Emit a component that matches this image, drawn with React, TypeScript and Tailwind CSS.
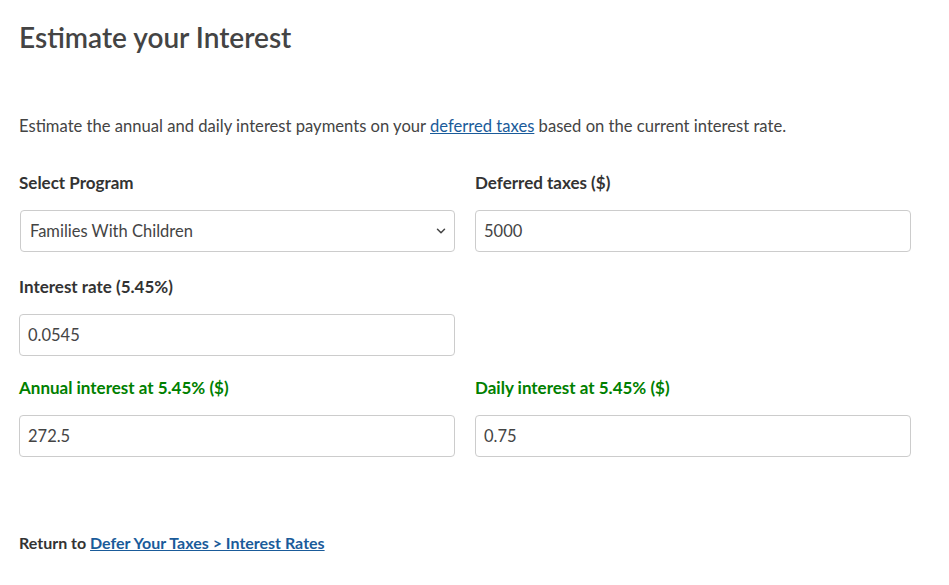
import React from "react";

const font = { fontFamily: '"Lato", "Open Sans", sans-serif' };

function Field({ label, value, green, select }: { label: string; value: string; green?: boolean; select?: boolean }) {
  return (
    <div className="flex flex-col">
      <div className={`text-[17px] leading-6 font-bold ${green ? "text-[#008000]" : "text-[#333333]"}`}>{label}</div>
      {select ? (
        <div className="mt-[15px] ml-px h-[42px] border border-[#cccccc] rounded-[4px] flex items-center justify-between pl-[9px] pr-[8px] text-[16.5px] text-[#444444] bg-white">
          <span>{value}</span>
          <svg width="10" height="10" viewBox="0 0 10 10" fill="none">
            <path d="M1.5 3.2 L5 6.7 L8.5 3.2" stroke="#444" strokeWidth="1.5" strokeLinecap="round" strokeLinejoin="round" />
          </svg>
        </div>
      ) : (
        <div className="mt-[15px] h-[42px] border border-[#cccccc] rounded-[4px] flex items-center pl-[8px] text-[16.5px] text-[#444444] bg-white">
          {value}
        </div>
      )}
    </div>
  );
}

export default function App() {
  return (
    <div className="w-[949px] h-[585px] bg-white text-[#444444]" style={font}>
      <div className="pl-[19px] pr-[38px]">
        <h1 className="pt-[18px] text-[28px] leading-[38px] font-semibold text-[#444444]">Estimate your Interest</h1>
        <p className="mt-[58px] text-[16.6px] leading-6 text-[#444444]">
          Estimate the annual and daily interest payments on your{" "}
          <a className="text-[#1a5b9a] underline">deferred taxes</a> based on the current interest rate.
        </p>
        <div className="mt-[33px] grid grid-cols-2 gap-x-5">
          <Field label="Select Program" value="Families With Children" select />
          <Field label="Deferred taxes ($)" value="5000" />
        </div>
        <div className="mt-[23px] grid grid-cols-2 gap-x-5">
          <Field label="Interest rate (5.45%)" value="0.0545" />
          <div />
        </div>
        <div className="mt-[20px] grid grid-cols-2 gap-x-5">
          <Field label="Annual interest at 5.45% ($)" value="272.5" green />
          <Field label="Daily interest at 5.45% ($)" value="0.75" green />
        </div>
        <p className="mt-[74px] text-[16px] leading-6 font-bold text-[#333333]">
          Return to <a className="text-[#1a5b9a] underline">Defer Your Taxes &gt; Interest Rates</a>
        </p>
      </div>
    </div>
  );
}
